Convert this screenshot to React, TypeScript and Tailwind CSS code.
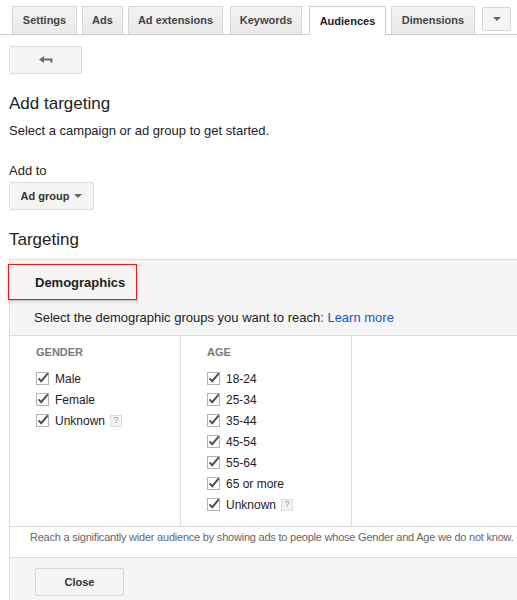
import React from 'react';

const tabs = [
  { label: 'Settings', w: 'w-[65px]', ml: 'ml-0' },
  { label: 'Ads', w: 'w-[41px]', ml: 'ml-[5px]' },
  { label: 'Ad extensions', w: 'w-[95px]', ml: 'ml-[5px]' },
  { label: 'Keywords', w: 'w-[72px]', ml: 'ml-[7px]' },
  { label: 'Audiences', w: 'w-[77px]', ml: 'ml-[7px]', active: true },
  { label: 'Dimensions', w: 'w-[84px]', ml: 'ml-[5px]' },
];

const genders = ['Male', 'Female', 'Unknown'];
const ages = ['18-24', '25-34', '35-44', '45-54', '55-64', '65 or more', 'Unknown'];

function Caret({ color = '#666' }: { color?: string }) {
  return (
    <svg width="8" height="4" viewBox="0 0 8 4" className="inline-block">
      <polygon points="0,0 8,0 4,4" fill={color} />
    </svg>
  );
}

function Check() {
  return (
    <svg width="13" height="13" viewBox="0 0 13 13" className="shrink-0 overflow-visible">
      <rect x="0.5" y="0.5" width="12" height="12" fill="#fff" stroke="#b3b3b3" />
      <path d="M2.6 6.4 L5.2 9.2 L11.8 1.4" fill="none" stroke="#4d4d4d" strokeWidth="1.9" />
    </svg>
  );
}

function Help() {
  return (
    <span className="ml-[5px] inline-flex h-[12px] w-[12px] items-center justify-center border border-[#dcdcdc] bg-[#f3f3f3] text-[9px] leading-none text-[#999]">
      ?
    </span>
  );
}

function Option({ label, help }: { label: string; help?: boolean }) {
  return (
    <div className="flex h-[21px] items-center text-[12px] leading-[21px] text-[#222]">
      <Check />
      <span className="ml-[6px] pt-px">{label}</span>
      {help && <Help />}
    </div>
  );
}

export default function App() {
  return (
    <div className="h-[600px] w-[517px] overflow-hidden bg-white font-['Liberation_Sans',Arial,sans-serif] text-[#222]">
      {/* tab strip */}
      <div className="flex h-[35px] items-end border-b border-[#cfcfcf] pl-[12px]">
        {tabs.map((t) =>
          t.active ? (
            <div
              key={t.label}
              className={`${t.w} ${t.ml} -mb-px flex h-[29px] items-center justify-center border border-b-0 border-[#cfcfcf] bg-white text-[11px] font-bold text-[#222]`}
            >
              {t.label}
            </div>
          ) : (
            <div
              key={t.label}
              className={`${t.w} ${t.ml} flex h-[28px] items-center justify-center border border-b-0 border-[#d6d6d6] bg-gradient-to-b from-[#f3f3f3] to-[#e9e9e9] text-[11px] font-bold text-[#444]`}
            >
              {t.label}
            </div>
          )
        )}
        <div className="mb-[3px] ml-[7px] flex h-[24px] w-[29px] items-center justify-center rounded-[2px] border border-[#d6d6d6] bg-[#f5f5f5]">
          <Caret />
        </div>
      </div>

      {/* back button */}
      <div className="ml-[9px] mt-[11px] flex h-[28px] w-[73px] items-center justify-center rounded-[2px] border border-[#dcdcdc] bg-[#f5f5f5]">
        <svg width="14" height="9" viewBox="0 0 14 9">
          <polygon points="0,3.5 5,0 5,7" fill="#6b6b6b" />
          <path d="M4 3.5 H12.5 V6.5" fill="none" stroke="#6b6b6b" strokeWidth="2" />
        </svg>
      </div>

      <div className="ml-[9px] mt-[20px] text-[17px] leading-[20px]">Add targeting</div>
      <div className="ml-[9px] mt-[9px] text-[13px] leading-[16px]">Select a campaign or ad group to get started.</div>
      <div className="ml-[9px] mt-[24px] text-[13px] leading-[16px]">Add to</div>
      <div className="ml-[9px] mt-[3px] flex h-[28px] w-[85px] items-center justify-center gap-[5px] rounded-[2px] border border-[#dcdcdc] bg-[#f5f5f5] text-[11px] font-bold text-[#333]">
        Ad group
        <Caret />
      </div>
      <div className="ml-[9px] mt-[20px] text-[17px] leading-[20px]">Targeting</div>

      {/* demographics panel */}
      <div className="ml-[9px] mt-[9px] w-[620px] border-l border-t border-[#dcdcdc] bg-[#f5f5f5]">
        <div className="pt-[4px]">
          <div className="-ml-[2px] flex h-[36px] w-[129px] items-center border border-[#e01b1b] pl-[26px] pt-px text-[13px] font-bold text-[#222] shadow-[0_1px_3px_rgba(0,0,0,0.25)]">
            Demographics
          </div>
        </div>
        <div className="mt-[10px] pl-[24px] text-[13px] leading-[16px]">
          Select the demographic groups you want to reach: <span className="text-[#1155cc]">Learn more</span>
        </div>

        <div className="mt-[9px] flex border-b border-t border-[#dcdcdc] bg-white">
          <div className="h-[190px] w-[171px] border-r border-[#dcdcdc] pl-[26px] pt-[10px]">
            <div className="text-[11px] font-bold leading-[13px] text-[#7a7a7a]">GENDER</div>
            <div className="mt-[9px]">
              {genders.map((g) => (
                <Option key={g} label={g} help={g === 'Unknown'} />
              ))}
            </div>
          </div>
          <div className="h-[190px] w-[171px] border-r border-[#dcdcdc] pl-[26px] pt-[10px]">
            <div className="text-[11px] font-bold leading-[13px] text-[#7a7a7a]">AGE</div>
            <div className="mt-[9px]">
              {ages.map((a) => (
                <Option key={a} label={a} help={a === 'Unknown'} />
              ))}
            </div>
          </div>
          <div className="flex-1" />
        </div>

        <div className="h-[31px] border-b border-[#dcdcdc] bg-white pl-[20px] pt-[4px] text-[11px] leading-[13px] tracking-[-0.22px] whitespace-nowrap text-[#666]">
          Reach a significantly wider audience by showing ads to people whose Gender and Age we do not know.
        </div>

        <div className="h-[60px] pl-[25px] pt-[10px]">
          <div className="flex h-[28px] w-[89px] items-center justify-center rounded-[2px] border border-[#d6d6d6] bg-[#f5f5f5] text-[11px] font-bold text-[#333]">
            Close
          </div>
        </div>
      </div>
    </div>
  );
}
